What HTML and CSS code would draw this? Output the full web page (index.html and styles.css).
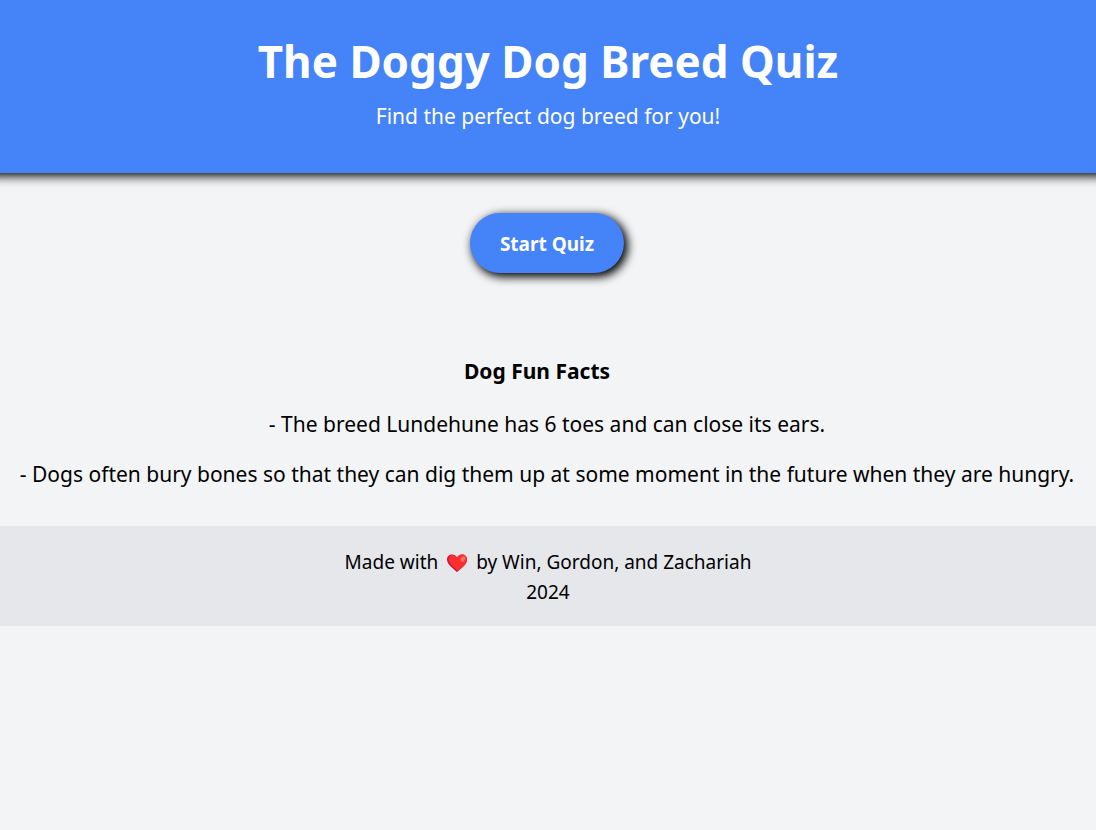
FILE: index.html
```html
<!DOCTYPE html>
<html lang="en">
<head>
<meta charset="utf-8">
<meta name="viewport" content="width=device-width, initial-scale=1">
<title>The Doggy Dog Breed Quiz</title>
<link rel="stylesheet" href="styles.css">
</head>
<body>
<header class="site-header">
  <h1 class="site-title">The Doggy Dog Breed Quiz</h1>
  <p class="tagline">Find the perfect dog breed for you!</p>
</header>
<main class="content">
  <button class="start-button" type="button">Start Quiz</button>
  <section class="facts">
    <h2 class="facts-title">Dog Fun Facts</h2>
    <p class="fact">- The breed Lundehune has 6 toes and can close its ears.</p>
    <p class="fact">- Dogs often bury bones so that they can dig them up at some moment in the future when they are hungry.</p>
  </section>
</main>
<footer class="site-footer">
  <p class="credit">Made with
    <svg class="heart" viewBox="0 0 22 20" role="img" aria-label="love"><path class="heart-edge" d="M11 19C7 15.500 1 11.500 1 6.500 1 3.500 3.200 1.500 6 1.500c2.200 0 4 1.200 5 3 1-1.800 2.800-3 5-3 2.800 0 5 2 5 5 0 5-6 9-10 12.500z"/><path class="heart-body" d="M12 18C8 14.500 2.500 11 2.500 6.500 2.500 4 4.200 2 6.500 2c2.200 0 3.800 1.200 4.500 3.200 1-2.200 2.800-3.700 5-3.700 2.800 0 5 2 5 5 0 5-5.500 8.500-9 11.500z"/><ellipse class="heart-shine" cx="17" cy="6" rx="3" ry="2" transform="rotate(-55 17 6)"/></svg>
    by Win, Gordon, and Zachariah</p>
  <p class="credit">2024</p>
</footer>
</body>
</html>
```
FILE: styles.css
```css
* {
  box-sizing: border-box;
}

body {
  margin: 0;
  background: #f3f4f6;
  color: #000;
  font-family: "Segoe UI", "Noto Sans", "Open Sans", sans-serif;
  text-align: center;
}

h1,
h2,
p {
  margin: 0;
}

.site-header {
  padding: 30px 20px 41px;
  background: #4483f8;
  color: #fff;
  box-shadow: 0 -7px 10px 10px #000;
}

.site-title {
  font-size: 44px;
  line-height: 62px;
}

.tagline {
  margin-top: 8px;
  font-size: 21px;
  line-height: 32px;
}

.content {
  padding: 40px 10px 37px 8px;
}

.start-button {
  padding: 16px 30px 14px;
  border: 0;
  border-radius: 30px;
  background: #4483f8;
  color: #fff;
  box-shadow: 3px 3px 10px 1px #000;
  font: bold 19px/30px "Segoe UI", "Noto Sans", "Open Sans", sans-serif;
  cursor: pointer;
}

.facts {
  margin-top: 80px;
}

.facts-title {
  margin-right: 20px;
  font-size: 21px;
  line-height: 36px;
}

.fact {
  margin-top: 20px;
  font-size: 21px;
  line-height: 30px;
}

.site-footer {
  padding: 21px 20px 19px;
  background: #e5e7eb;
}

.credit {
  font-size: 19px;
  line-height: 30px;
}

.heart {
  width: 22px;
  height: 20px;
  margin: 0 3px;
  vertical-align: -4px;
}

.heart-edge {
  fill: #ca0b4a;
}

.heart-body {
  fill: #f8312f;
}

.heart-shine {
  fill: #f37366;
}
```
